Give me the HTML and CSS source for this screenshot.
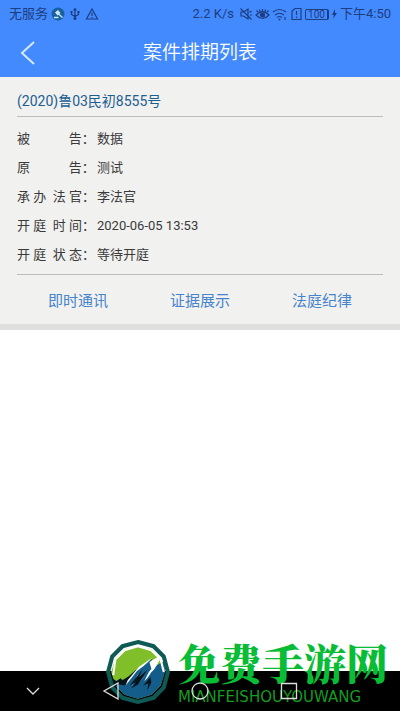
FILE: index.html
```html
<!DOCTYPE html>
<html lang="zh-CN">
<head>
<meta charset="utf-8">
<meta name="viewport" content="width=device-width, initial-scale=1">
<title>案件排期列表</title>
<link rel="stylesheet" href="styles.css">
</head>
<body>
<header class="top">
  <div class="status">
    <div class="status-group">
      <span>无服务</span>
      <svg width="14" height="14" viewBox="0 0 14 14"><circle cx="7" cy="7" r="6.500" fill="#17619f"/><path d="M4 5.500l3-2.500 2.500 3-3 2.500z" fill="#cfe6f5"/><path d="M7.500 7l4 3.500M3 10.500h4.500" stroke="#cfe6f5" stroke-width="1.300"/></svg>
      <svg class="line-icon" width="14" height="14" viewBox="0 0 14 14"><path d="M7 2v9M3.500 5v2.500L7 9.500l3.500-2V5"/><path d="M7 .5L5 3.500h4zM2.500 4h2v2h-2zM9.500 4h2v2h-2z" fill="#1c3d80" stroke="none"/><circle cx="7" cy="11.500" r="1.500" fill="#1c3d80" stroke="none"/></svg>
      <svg class="line-icon" width="14" height="14" viewBox="0 0 14 14"><path d="M7 2l5.500 10h-11zM7 5.500v3.500M7 10v1"/></svg>
    </div>
    <div class="status-group end">
      <span class="rate">2.2 K/s</span>
      <svg class="line-icon" width="14" height="14" viewBox="0 0 14 14"><path d="M2 5v4h2.500L9 12V2L4.500 5zM1.500 1.500l11 11M10.500 5.500l2-1.500M11 8h2"/></svg>
      <svg class="line-icon" width="15" height="14" viewBox="0 0 15 14"><path d="M1 8q6.500-6.500 13 0-6.500 7-13 0zM3 5L1.500 3.500M12 5l1.500-1.500M7.500 4V2M5 4.500L4.500 2.500M10 4.500l.500-2"/><circle cx="7.500" cy="8" r="2" fill="#1c3d80"/></svg>
      <svg class="line-icon" width="16" height="14" viewBox="0 0 16 14"><path d="M1 5q6.500-5 13 0M3 8q4.500-3.500 9 0M5 10.500q2.500-2 5 0"/><circle cx="7.500" cy="12.500" r="1" fill="#1c3d80" stroke="none"/><path d="M13 10v3"/></svg>
      <svg class="line-icon" width="13" height="14" viewBox="0 0 13 14"><path d="M2 4l3-2.500h6v11H2zM6.500 4v4M6.500 9.500v1.500"/></svg>
      <span class="battery">100</span>
      <svg width="7" height="12" viewBox="0 0 7 12"><path d="M4 1L1 7h2l-1 4 4-6H4z" fill="#1c3d80"/></svg>
      <span>下午4:50</span>
    </div>
  </div>
  <div class="titlebar">
    <button class="back" type="button" aria-label="返回"><svg width="16" height="26" viewBox="0 0 16 26"><path d="M14 2L2 13l12 11" fill="none" stroke="#d4e8ff" stroke-width="2"/></svg></button>
    <h1>案件排期列表</h1>
  </div>
</header>
<main>
  <article class="case">
    <h2>(2020)鲁03民初8555号</h2>
    <dl>
      <div class="row"><dt>被            告：</dt><dd>数据</dd></div>
      <div class="row"><dt>原            告：</dt><dd>测试</dd></div>
      <div class="row"><dt>承 办  法 官：</dt><dd>李法官</dd></div>
      <div class="row"><dt>开 庭  时 间：</dt><dd>2020-06-05 13:53</dd></div>
      <div class="row"><dt>开 庭  状 态：</dt><dd>等待开庭</dd></div>
    </dl>
    <div class="actions">
      <button type="button">即时通讯</button>
      <button type="button">证据展示</button>
      <button type="button">法庭纪律</button>
    </div>
  </article>
</main>
<footer class="navbar">
  <div class="brand">
    <svg width="68" height="66" viewBox="2 0 64 64">
      <path d="M34 7l13 3 9 9 4 13-4 13-9 9-13 4-13-4-9-9-4-13 4-13 9-9z" fill="#80bf2a"/>
      <path d="M9 41l8-1 8-2 10-9 13-10-4 11 16-9v11l-4 13-9 9-13 4-13-4-9-9z" fill="#145d8b"/>
      <path d="M8 37l5 4 4-3 2 2 6-4 8-7-5 10-7 6-5-1-7 3z" fill="#06151b"/>
      <path d="M48 18L35 27 24 40l-2 5 8-8 6-7-8 16 8-5 10-12-6 12 7-7 12-20-12 7-8 6z" fill="#fff"/>
      <path d="M45 22L33 31 22 45l4-2 9-10-7 13 5-2 14-15zM57 24L47 32l-9 14 8-4-2 8 3-9z" fill="#145d8b"/>
      <path d="M38 30L26 45l6-3-5 6 7-4 9-14-8 7zM46 37l-7 8 5-2-1 7 4-8z" fill="#06151b"/>
      <path d="M34 3l15 4 10 10 4 15-4 15-10 10-15 4-15-4L9 47 5 32 9 17 19 7z" fill="none" stroke="#105a56" stroke-width="4"/>
      <path d="M10 35l2-15 9-9 13-4 13 4 9 9 3 12" fill="none" stroke="#fff" stroke-width="2"/>
    </svg>
    <div class="brand-text"><strong>免费手游网</strong><span>MIANFEISHOUYOUWANG</span></div>
  </div>
  <button type="button" aria-label="收起"><svg width="18" height="18" viewBox="0 0 18 18"><path d="M3 6l6 6 6-6"/></svg></button>
  <button type="button" aria-label="后退"><svg width="18" height="18" viewBox="0 0 18 18"><path d="M16 1v16L2 9z"/></svg></button>
  <button type="button" aria-label="主页"><svg width="18" height="18" viewBox="0 0 18 18"><circle cx="9" cy="9" r="8"/></svg></button>
  <button type="button" aria-label="最近任务"><svg width="18" height="18" viewBox="0 0 18 18"><path d="M1.500 1.500h15v15h-15z"/></svg></button>
</footer>
</body>
</html>
```
FILE: styles.css
```css
* { box-sizing: border-box; }
body {
  margin: 0;
  min-height: 100vh;
  display: flex;
  flex-direction: column;
  background: #fff;
  color: #3a3a3a;
  font-family: Roboto, "Noto Sans CJK SC", sans-serif;
  font-size: 13px;
}
svg { display: block; flex: none; }
button {
  padding: 0;
  border: 0;
  background: none;
  font: inherit;
  color: inherit;
}
h1, h2, dl, dd { margin: 0; font-weight: 400; }
.top { background: #448aff; color: #fff; }
.status {
  height: 28px;
  padding: 0 9px;
  display: flex;
  align-items: center;
  justify-content: space-between;
  color: #1c3d80;
  line-height: 20px;
  white-space: nowrap;
}
.status-group { display: flex; align-items: center; gap: 3px; }
.end { gap: 2px; }
.rate { margin-right: 3px; }
.line-icon { fill: none; stroke: #1c3d80; stroke-width: 1.2; }
.battery {
  padding: 0 2px;
  border: 1px solid #1c3d80;
  border-right-width: 2px;
  border-radius: 2px;
  font-size: 10px;
  line-height: 9px;
}
.titlebar {
  height: 49px;
  padding: 0 20px;
  display: grid;
  grid-template-columns: 16px 1fr 16px;
  align-items: center;
}
.titlebar h1 {
  font-size: 19px;
  font-weight: 350;
  line-height: 28px;
  text-align: center;
}
main { flex: 1; }
.case {
  padding: 10px 17px 0;
  background: #f1f1f0;
  border-bottom: 6px solid #e0e0e0;
}
.case h2 {
  border-bottom: 1px solid #bdbdbd;
  color: #1c5e92;
  font-size: 14px;
  line-height: 29px;
}
.case dl { padding: 7px 0 5px; border-bottom: 1px solid #bdbdbd; }
.row { display: flex; line-height: 29px; }
.row dt { width: 80px; white-space: pre; }
.actions { display: grid; grid-template-columns: repeat(3, 1fr); }
.actions button { height: 49px; color: #4784cb; font-size: 15px; }
.navbar {
  position: relative;
  height: 40px;
  padding-right: 67px;
  display: grid;
  grid-template-columns: 66px 1fr 1fr 1fr;
  align-items: center;
  background: #000;
}
.navbar button { justify-self: center; z-index: 1; }
.navbar button svg { fill: none; stroke: #ddd; stroke-width: 1.3; }
.brand {
  position: absolute;
  right: 12px;
  bottom: 6px;
  display: flex;
  align-items: center;
  gap: 6px;
  pointer-events: none;
}
.brand-text {
  display: flex;
  flex-direction: column;
  gap: 4px;
  color: #08bd35;
}
.brand strong {
  font-family: "Noto Serif CJK SC", "Noto Sans CJK SC", serif;
  font-size: 42px;
  font-weight: 900;
  line-height: 46px;
}
.brand span {
  color: #149d20;
  font-family: "DejaVu Sans", sans-serif;
  font-size: 15px;
  line-height: 16px;
}
```
